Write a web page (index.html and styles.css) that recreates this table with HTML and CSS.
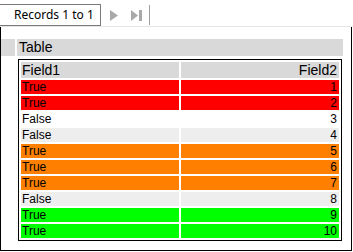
FILE: index.html
```html
<!DOCTYPE html>
<html lang="en">
<head>
  <meta charset="UTF-8">
  <title>Records</title>
  <link rel="stylesheet" href="styles.css">
</head>
<body>

<div class="toolbar">
  <div class="records">Records 1 to 1</div>
  <svg class="nav-btn next" width="9" height="11" viewBox="0 0 9 11">
    <polygon points="0,0 8,5.5 0,11" fill="#a9a9a9"/>
  </svg>
  <svg class="nav-btn last" width="11" height="11" viewBox="0 0 11 11">
    <polygon points="0,0 7,5.5 0,11" fill="#a9a9a9"/>
    <rect x="8" y="0" width="3" height="11" fill="#a9a9a9"/>
  </svg>
  <div class="sep"></div>
</div>

<div class="panel">
  <div class="section">
    <div class="marker"></div>
    <div class="title">Table</div>
  </div>

  <table class="grid">
    <tr class="head">
      <td>Field1</td>
      <td class="num">Field2</td>
    </tr>
    <tr class="red"><td>True</td><td class="num">1</td></tr>
    <tr class="red"><td>True</td><td class="num">2</td></tr>
    <tr><td>False</td><td class="num">3</td></tr>
    <tr class="alt"><td>False</td><td class="num">4</td></tr>
    <tr class="orange"><td>True</td><td class="num">5</td></tr>
    <tr class="orange"><td>True</td><td class="num">6</td></tr>
    <tr class="orange"><td>True</td><td class="num">7</td></tr>
    <tr class="alt"><td>False</td><td class="num">8</td></tr>
    <tr class="green"><td>True</td><td class="num">9</td></tr>
    <tr class="green"><td>True</td><td class="num">10</td></tr>
  </table>
</div>

</body>
</html>
```

FILE: styles.css
```css
body {
  margin: 0;
  width: 353px;
  background: #fff;
  font-family: "Liberation Sans", Arial, sans-serif;
}
.toolbar {
  display: flex;
  align-items: center;
  height: 22px;
  padding-top: 4px;
  border-bottom: 1px solid #e6e6e6;
}
.records {
  box-sizing: border-box;
  margin-left: -1px;
  width: 102px;
  height: 22px;
  padding-left: 14px;
  border: 1px solid #7a7a7a;
  font-family: "Noto Sans", sans-serif;
  font-size: 12px;
  line-height: 19px;
  color: #000;
}
.nav-btn.next {
  margin-left: 9px;
}
.nav-btn.last {
  margin-left: 12px;
}
.sep {
  width: 1px;
  height: 20px;
  margin-left: 7px;
  background: #a0a0a0;
}
.panel {
  box-sizing: border-box;
  width: 352px;
  height: 224px;
  padding-top: 12px;
  border: 1px solid #000;
  border-top: none;
}
.section {
  display: flex;
  gap: 2px;
  height: 17px;
}
.marker {
  width: 14px;
  background: #d9d9d9;
}
.title {
  width: 326px;
  background: #d9d9d9;
  font-size: 14px;
  line-height: 17px;
  padding-left: 2px;
  box-sizing: border-box;
  color: #000;
}
.grid {
  margin: 3px 0 0 17px;
  width: 324px;
  border: 1px solid #000;
  border-spacing: 2px;
  table-layout: fixed;
}
.grid td {
  padding: 0 2px 0 1px;
  height: 14px;
  font-size: 12px;
  line-height: 14px;
  color: #000;
  white-space: nowrap;
}
.grid .head td {
  height: 16px;
  font-size: 14px;
  line-height: 16px;
  background: #d9d9d9;
}
.grid .num {
  text-align: right;
}
.red td {
  background: #ff0000;
}
.orange td {
  background: #ff8000;
}
.green td {
  background: #00ff00;
}
.alt td {
  background: #eeeeee;
}
```
